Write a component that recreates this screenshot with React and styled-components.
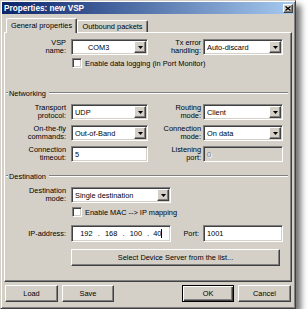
import React from "react";
import styled, { createGlobalStyle, css } from "styled-components";

const face = "#d4d0c8";

const GlobalStyle = createGlobalStyle`
  html, body { margin: 0; padding: 0; background: #fff; }
  body {
    font-family: "Liberation Sans", Arial, sans-serif;
    font-size: 7.4px;
    color: #000;
  }
`;

const raised = css`
  border: 1px solid;
  border-color: #fff #404040 #404040 #fff;
  box-shadow: inset -1px -1px #808080, inset 1px 1px ${face};
`;

const sunken = css`
  border: 1px solid;
  border-color: #808080 #fff #fff #808080;
  box-shadow: inset 1px 1px #404040, inset -1px -1px ${face};
`;

const Window = styled.div`
  box-sizing: border-box;
  width: 296px;
  height: 309px;
  background: ${face};
  border: 1px solid;
  border-color: ${face} #404040 #404040 ${face};
  box-shadow: inset 1px 1px #fff, inset -1px -1px #808080,
    5px 5px 6px rgba(0, 0, 0, 0.55);
  padding: 1px;
  display: flex;
  flex-direction: column;
`;

const TitleBar = styled.div`
  height: 12px;
  display: flex;
  align-items: center;
  padding: 0 1px 0 2px;
  background: linear-gradient(to right, #0a246a, #a6caf0);
`;

const Title = styled.span`
  color: #fff;
  font-weight: bold;
  font-size: 8.2px;
`;

const CloseButton = styled.div`
  box-sizing: border-box;
  margin-left: auto;
  width: 10px;
  height: 9px;
  background: ${face};
  ${raised};
  display: flex;
  align-items: center;
  justify-content: center;
`;

const Body = styled.div`
  flex: 1;
  display: flex;
  flex-direction: column;
  padding: 4px 2px 0 2px;
`;

const TabStrip = styled.div`
  display: flex;
  align-items: flex-end;
  height: 14px;
  padding-left: 2px;
  position: relative;
  z-index: 1;
`;

const Tab = styled.div`
  box-sizing: border-box;
  width: 71px;
  height: ${(p) => (p.$active ? 15 : 12)}px;
  margin-bottom: ${(p) => (p.$active ? -1 : 0)}px;
  background: ${face};
  border: 1px solid;
  border-color: #fff #404040 transparent #fff;
  border-bottom: none;
  border-radius: 2px 2px 0 0;
  box-shadow: inset -1px 0 #808080;
  display: flex;
  align-items: center;
  justify-content: center;
  padding-bottom: ${(p) => (p.$active ? 2 : 0)}px;
  white-space: nowrap;
`;

const Panel = styled.div`
  box-sizing: border-box;
  height: 250px;
  border: 1px solid;
  border-color: #fff #404040 #404040 #fff;
  box-shadow: inset -1px -1px #808080;
  padding-top: 6px;
  display: flex;
  flex-direction: column;
`;

const Row = styled.div`
  display: grid;
  grid-template-columns: 66px 77px 55px 80px;
  height: ${(p) => p.$h || 16}px;
  margin-top: ${(p) => p.$mt || 0}px;
`;

const Label = styled.div`
  align-self: center;
  text-align: right;
  line-height: 8px;
  padding-right: ${(p) => (p.$pr === undefined ? 5 : p.$pr)}px;
  white-space: nowrap;
`;

const Combo = styled.div`
  box-sizing: border-box;
  ${sunken};
  background: #fff;
  display: flex;
  align-items: center;
  width: ${(p) => (p.$w ? `${p.$w}px` : "auto")};
`;

const ComboText = styled.span`
  flex: 1;
  padding-left: ${(p) => p.$pl || 3}px;
  white-space: nowrap;
`;

const ArrowButton = styled.div`
  box-sizing: border-box;
  width: 12px;
  height: 12px;
  margin: 1px;
  background: ${face};
  ${raised};
  display: flex;
  align-items: center;
  justify-content: center;
`;

const Field = styled.div`
  box-sizing: border-box;
  ${sunken};
  background: ${(p) => (p.$disabled ? face : "#fff")};
  color: ${(p) => (p.$disabled ? "#808080" : "#000")};
  text-shadow: ${(p) => (p.$disabled ? "1px 1px #fff" : "none")};
  display: flex;
  align-items: center;
  padding-left: ${(p) => p.$pl || 3}px;
  width: ${(p) => (p.$w ? `${p.$w}px` : "auto")};
`;

const Octet = styled.span`
  width: 19px;
  box-sizing: border-box;
  display: flex;
  align-items: center;
  justify-content: ${(p) => (p.$left ? "flex-start" : "center")};
  padding-left: ${(p) => (p.$left ? 2 : 0)}px;
`;

const Dot = styled.span`
  width: 6px;
  text-align: center;
`;

const Caret = styled.span`
  width: 1px;
  height: 9px;
  background: #000;
`;

const CheckRow = styled.div`
  display: flex;
  align-items: center;
  gap: 3px;
  margin-left: 67px;
  margin-top: ${(p) => p.$mt}px;
  height: 10px;
`;

const CheckBox = styled.div`
  box-sizing: border-box;
  width: 10px;
  height: 10px;
  background: #fff;
  ${sunken};
`;

const GroupHeader = styled.div`
  display: flex;
  align-items: center;
  height: 10px;
  margin: ${(p) => p.$mt}px 3px 0 1px;

  &::before,
  &::after {
    content: "";
    height: 0;
    border-top: 1px solid #808080;
    border-bottom: 1px solid #fff;
  }
  &::before {
    width: 2px;
  }
  &::after {
    flex: 1;
  }
`;

const GroupTitle = styled.span`
  padding: 0 3px 0 1px;
`;

const Button = styled.div`
  box-sizing: border-box;
  width: ${(p) => p.$w}px;
  height: 17px;
  background: ${face};
  display: flex;
  align-items: center;
  justify-content: center;
  white-space: nowrap;
  ${(p) =>
    p.$default
      ? css`
          border: 1px solid #000;
          box-shadow: inset 1px 1px #fff, inset -1px -1px #404040,
            inset -2px -2px #808080;
        `
      : raised};
`;

const WideButton = styled(Button)`
  margin: 7px 0 0 66px;
`;

const Footer = styled.div`
  display: flex;
  gap: 4px;
  margin: 3px 1px 0 1px;
`;

const Spacer = styled.div`
  flex: 1;
`;

const DownArrow = () => (
  <svg width="5" height="3" viewBox="0 0 5 3">
    <path d="M0 0h5L2.5 3z" fill="#000" />
  </svg>
);

const CloseIcon = () => (
  <svg width="6" height="5" viewBox="0 0 6 5">
    <path d="M0.5 0.5L5.5 4.5M5.5 0.5L0.5 4.5" stroke="#000" strokeWidth="1.3" />
  </svg>
);

const Select = ({ value, w, pl }) => (
  <Combo $w={w}>
    <ComboText $pl={pl}>{value}</ComboText>
    <ArrowButton>
      <DownArrow />
    </ArrowButton>
  </Combo>
);

const App = () => (
  <>
    <GlobalStyle />
    <Window>
      <TitleBar>
        <Title>Properties: new VSP</Title>
        <CloseButton>
          <CloseIcon />
        </CloseButton>
      </TitleBar>
      <Body>
        <TabStrip>
          <Tab $active>General properties</Tab>
          <Tab>Outbound packets</Tab>
        </TabStrip>
        <Panel>
          <Row>
            <Label>
              VSP
              <br />
              name:
            </Label>
            <Select value="COM3" pl={16} />
            <Label $pr={2}>
              Tx error
              <br />
              handling:
            </Label>
            <Select value="Auto-discard" />
          </Row>
          <CheckRow $mt={3}>
            <CheckBox />
            <span>Enable data logging (in Port Monitor)</span>
          </CheckRow>

          <GroupHeader $mt={20}>
            <GroupTitle>Networking</GroupTitle>
          </GroupHeader>
          <Row $mt={6}>
            <Label>
              Transport
              <br />
              protocol:
            </Label>
            <Select value="UDP" />
            <Label $pr={2}>
              Routing
              <br />
              mode:
            </Label>
            <Select value="Client" />
          </Row>
          <Row $mt={5}>
            <Label>
              On-the-fly
              <br />
              commands:
            </Label>
            <Select value="Out-of-Band" />
            <Label $pr={2}>
              Connection
              <br />
              mode:
            </Label>
            <Select value="On data" />
          </Row>
          <Row $mt={5}>
            <Label>
              Connection
              <br />
              timeout:
            </Label>
            <Field>5</Field>
            <Label $pr={2}>
              Listening
              <br />
              port:
            </Label>
            <Field $disabled>0</Field>
          </Row>

          <GroupHeader $mt={9}>
            <GroupTitle>Destination</GroupTitle>
          </GroupHeader>
          <Row $mt={6}>
            <Label>
              Destination
              <br />
              mode:
            </Label>
            <Select value="Single destination" w={100} />
          </Row>
          <CheckRow $mt={4}>
            <CheckBox />
            <span>Enable MAC --&gt; IP mapping</span>
          </CheckRow>
          <Row $mt={8} $h={17}>
            <Label>IP-address:</Label>
            <Field $w={100} $pl={5}>
              <Octet>192</Octet>
              <Dot>.</Dot>
              <Octet>168</Octet>
              <Dot>.</Dot>
              <Octet>100</Octet>
              <Dot>.</Dot>
              <Octet $left>
                40
                <Caret />
              </Octet>
            </Field>
            <Label $pr={4}>Port:</Label>
            <Field>1001</Field>
          </Row>
          <WideButton $w={209}>Select Device Server from the list...</WideButton>
        </Panel>
        <Footer>
          <Button $w={53}>Load</Button>
          <Button $w={52}>Save</Button>
          <Spacer />
          <Button $w={52} $default>
            OK
          </Button>
          <Button $w={53}>Cancel</Button>
        </Footer>
      </Body>
    </Window>
  </>
);

export default App;
